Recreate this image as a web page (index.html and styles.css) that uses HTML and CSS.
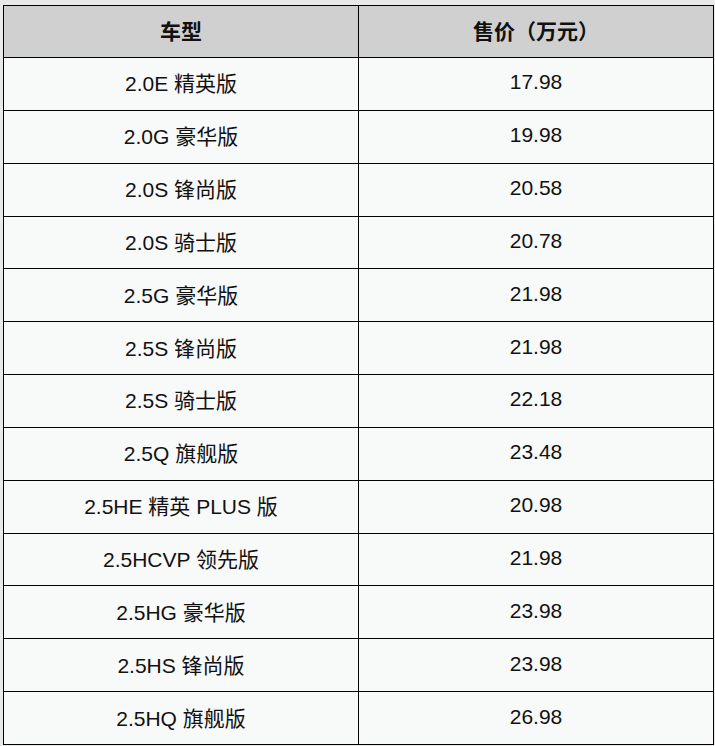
FILE: index.html
```html
<!DOCTYPE html>
<html lang="zh-CN">
<head>
<meta charset="utf-8">
<link rel="stylesheet" href="styles.css">
</head>
<body>
<table class="price-table">
  <thead>
    <tr><th class="col-model">车型</th><th class="col-price">售价（万元）</th></tr>
  </thead>
  <tbody>
    <tr><td>2.0E 精英版</td><td>17.98</td></tr>
    <tr><td>2.0G 豪华版</td><td>19.98</td></tr>
    <tr><td>2.0S 锋尚版</td><td>20.58</td></tr>
    <tr><td>2.0S 骑士版</td><td>20.78</td></tr>
    <tr><td>2.5G 豪华版</td><td>21.98</td></tr>
    <tr><td>2.5S 锋尚版</td><td>21.98</td></tr>
    <tr><td>2.5S 骑士版</td><td>22.18</td></tr>
    <tr><td>2.5Q 旗舰版</td><td>23.48</td></tr>
    <tr><td>2.5HE 精英 PLUS 版</td><td>20.98</td></tr>
    <tr><td>2.5HCVP 领先版</td><td>21.98</td></tr>
    <tr><td>2.5HG 豪华版</td><td>23.98</td></tr>
    <tr><td>2.5HS 锋尚版</td><td>23.98</td></tr>
    <tr><td>2.5HQ 旗舰版</td><td>26.98</td></tr>
  </tbody>
</table>
</body>
</html>
```
FILE: styles.css
```css
html, body {
  margin: 0;
  padding: 0;
  background: #e9e9e9;
}
body {
  padding: 5px 0 0 3px;
}
.price-table {
  border-collapse: collapse;
  width: 711px;
  table-layout: fixed;
  font-family: "Liberation Sans", "Noto Sans CJK SC", sans-serif;
  font-size: 21px;
  color: #111;
  background: #f8f9f9;
}
.price-table th,
.price-table td {
  border: 1px solid #000;
  text-align: center;
  vertical-align: middle;
  padding: 0 0 3px 0;
}
.price-table th {
  background: #d0d0d0;
  font-weight: bold;
  height: 48px;
}
.price-table td {
  height: 48.85px;
}
.col-model {
  width: 354px;
}
```
